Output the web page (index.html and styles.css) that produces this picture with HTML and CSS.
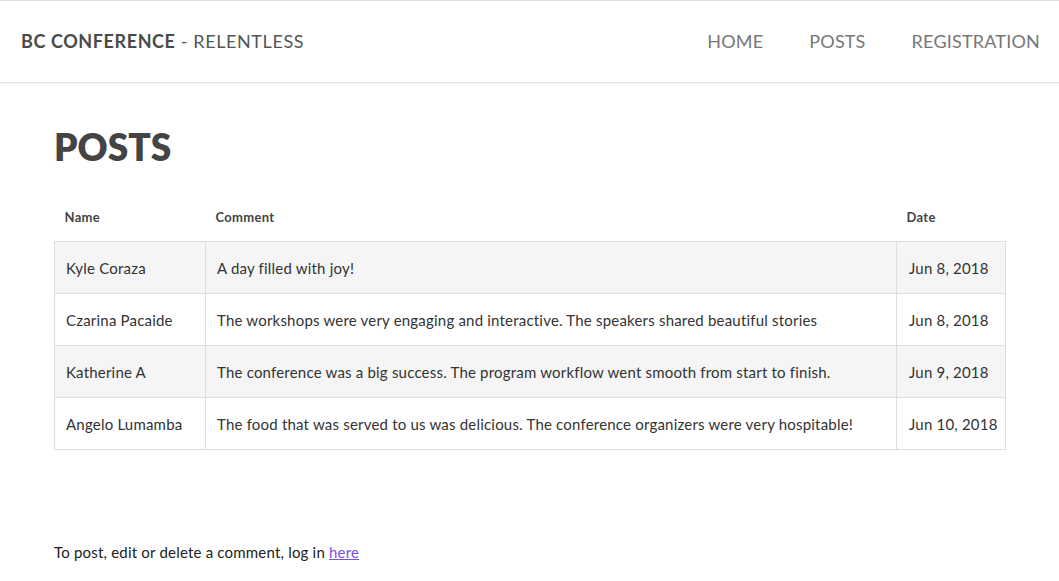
FILE: index.html
```html
<!DOCTYPE html>
<html lang="en">
<head>
<meta charset="utf-8">
<title>BC Conference - Posts</title>
<link rel="stylesheet" href="styles.css">
</head>
<body>
<header class="site-header">
  <div class="brand"><strong>BC CONFERENCE</strong> - RELENTLESS</div>
  <nav class="nav">
    <a href="#">HOME</a>
    <a href="#">POSTS</a>
    <a href="#">REGISTRATION</a>
  </nav>
</header>
<main class="content">
  <h1 class="title">POSTS</h1>
  <table class="posts">
    <thead>
      <tr><th class="c-name">Name</th><th class="c-comment">Comment</th><th class="c-date">Date</th></tr>
    </thead>
    <tbody>
      <tr><td>Kyle Coraza</td><td>A day filled with joy!</td><td>Jun 8, 2018</td></tr>
      <tr><td>Czarina Pacaide</td><td>The workshops were very engaging and interactive. The speakers shared beautiful stories</td><td>Jun 8, 2018</td></tr>
      <tr><td>Katherine A</td><td>The conference was a big success. The program workflow went smooth from start to finish.</td><td>Jun 9, 2018</td></tr>
      <tr><td>Angelo Lumamba</td><td>The food that was served to us was delicious. The conference organizers were very hospitable!</td><td>Jun 10, 2018</td></tr>
    </tbody>
  </table>
  <p class="note">To post, edit or delete a comment, log in <a href="#" class="login">here</a></p>
</main>
</body>
</html>
```
FILE: styles.css
```css
html, body {
  margin: 0;
  padding: 0;
  background: #fff;
}
body {
  font-family: "Lato", "Open Sans", sans-serif;
  color: #333;
  font-size: 15px;
}
.site-header {
  height: 81px;
  border-top: 1px solid #e0e0e0;
  border-bottom: 1px solid #e0e0e0;
  display: flex;
  align-items: center;
  justify-content: space-between;
  padding: 0 19px 0 21px;
  box-shadow: 0 1px 1px rgba(0,0,0,0.03);
}
.brand {
  font-size: 18px;
  color: #555;
  letter-spacing: 0.6px;
  margin-top: -2px;
}
.brand strong {
  font-weight: 700;
  color: #4a4a4a;
}
.nav {
  display: flex;
  gap: 46px;
  margin-top: -2px;
}
.nav a {
  color: #777;
  text-decoration: none;
  font-size: 18px;
  letter-spacing: 0.2px;
}
.content {
  padding: 0 53px 0 54px;
}
.title {
  margin: 40px 0 0;
  font-size: 37px;
  font-weight: 800;
  color: #444;
  line-height: 48px;
}
.posts {
  margin-top: 39px;
  width: 100%;
  border-collapse: collapse;
  table-layout: fixed;
  font-size: 15px;
}
.posts th {
  text-align: left;
  font-size: 13px;
  line-height: 14px;
  letter-spacing: 0.3px;
  font-weight: 700;
  color: #444;
  padding: 0 10px 17px;
  height: 14px;
}
.posts td {
  border: 1px solid #ddd;
  height: 52px;
  padding: 0 11px;
  color: #333;
  letter-spacing: 0.2px;
  white-space: nowrap;
  box-sizing: border-box;
}
.posts tbody tr:nth-child(odd) td {
  background: #f5f5f5;
}
.posts td:last-child {
  padding-left: 12px;
  padding-right: 6px;
}
.c-name { width: 131px; }
.c-date { width: 89px; }
.note {
  margin: 93px 0 0;
  font-size: 15px;
  color: #222;
  letter-spacing: 0.2px;
}
.login {
  color: #7e4fe0;
}
```
